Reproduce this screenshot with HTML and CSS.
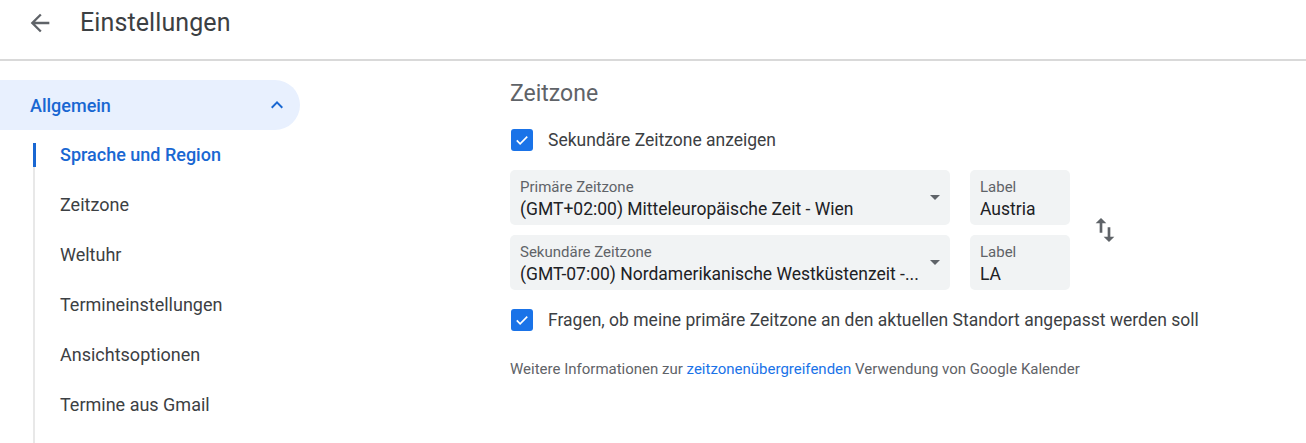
FILE: index.html
```html
<!DOCTYPE html>
<html lang="de">
<head>
<meta charset="utf-8">
<link rel="stylesheet" href="styles.css">
</head>
<body>
<header class="topbar">
  <span class="back">
    <svg width="28" height="28" viewBox="0 0 24 24"><path fill="#5f6368" d="M20 11H7.83l5.59-5.59L12 4l-8 8 8 8 1.41-1.41L7.83 13H20v-2z"/></svg>
  </span>
  <h1 class="title">Einstellungen</h1>
</header>
<div class="layout">
  <nav class="sidebar">
    <div class="group">
      <span>Allgemein</span>
      <svg width="24" height="24" viewBox="0 0 24 24"><path fill="#1967d2" d="M7.41 15.41L12 10.83l4.59 4.58L18 14l-6-6-6 6z"/></svg>
    </div>
    <ul class="sub">
      <li class="active">Sprache und Region</li>
      <li>Zeitzone</li>
      <li>Weltuhr</li>
      <li>Termineinstellungen</li>
      <li>Ansichtsoptionen</li>
      <li>Termine aus Gmail</li>
    </ul>
  </nav>
  <main class="content">
    <h2 class="heading">Zeitzone</h2>
    <label class="check">
      <span class="box"><svg width="18" height="18" viewBox="0 0 24 24"><path fill="none" stroke="#fff" stroke-width="2.2" d="M5 12.5l4.5 4.5L19 7.5"/></svg></span>
      <span>Sekundäre Zeitzone anzeigen</span>
    </label>
    <div class="zones">
      <div class="fields">
        <div class="row">
          <div class="select">
            <div class="ftext">
              <span class="flabel">Primäre Zeitzone</span>
              <span class="fvalue">(GMT+02:00) Mitteleuropäische Zeit - Wien</span>
            </div>
            <span class="caret"></span>
          </div>
          <div class="input">
            <span class="flabel">Label</span>
            <span class="fvalue">Austria</span>
          </div>
        </div>
        <div class="row">
          <div class="select">
            <div class="ftext">
              <span class="flabel">Sekundäre Zeitzone</span>
              <span class="fvalue">(GMT-07:00) Nordamerikanische Westküstenzeit -...</span>
            </div>
            <span class="caret"></span>
          </div>
          <div class="input">
            <span class="flabel">Label</span>
            <span class="fvalue">LA</span>
          </div>
        </div>
      </div>
      <span class="swap">
        <svg width="32" height="32" viewBox="0 0 24 24"><path fill="#5f6368" d="M16 17.01V10h-2v7.01h-3L15 21l4-3.99h-3zM9 3L5 6.99h3V14h2V6.99h3L9 3z"/></svg>
      </span>
    </div>
    <label class="check check2">
      <span class="box"><svg width="18" height="18" viewBox="0 0 24 24"><path fill="none" stroke="#fff" stroke-width="2.2" d="M5 12.5l4.5 4.5L19 7.5"/></svg></span>
      <span>Fragen, ob meine primäre Zeitzone an den aktuellen Standort angepasst werden soll</span>
    </label>
    <p class="info">Weitere Informationen zur <a href="#">zeitzonenübergreifenden</a> Verwendung von Google Kalender</p>
  </main>
</div>
</body>
</html>
```
FILE: styles.css
```css
* { box-sizing: border-box; }
html, body { margin: 0; padding: 0; background: #fff; }
body {
  font-family: Roboto, "Noto Sans", Arial, sans-serif;
  color: #3c4043;
  width: 1306px;
  height: 443px;
  overflow: hidden;
}
.topbar {
  height: 61px;
  display: flex;
  align-items: center;
  border-bottom: 2px solid #d9d9d9;
  padding-left: 26px;
  padding-bottom: 14px;
}
.back { display: flex; width: 28px; height: 28px; }
.title {
  margin: 0 0 0 26px;
  font-size: 25px;
  font-weight: 400;
  color: #3c4043;
  letter-spacing: 0.1px;
}
.layout { display: flex; padding-top: 19px; }
.sidebar { width: 300px; flex: none; }
.group {
  height: 50px;
  background: #e8f0fe;
  border-radius: 0 25px 25px 0;
  display: flex;
  align-items: center;
  justify-content: space-between;
  padding: 0 11px 0 30px;
  color: #1967d2;
  font-size: 18px;
  font-weight: 500;
}
.sub {
  list-style: none;
  margin: 13px 0 0 33px;
  padding: 0;
  border-left: 2px solid #e8e8e8;
}
.sub li {
  height: 50px;
  display: flex;
  align-items: flex-start;
  padding: 0 0 0 25px;
  font-size: 18px;
  line-height: 24px;
  color: #3c4043;
  position: relative;
}
.sub li.active { color: #1967d2; font-weight: 500; }
.sub li.active::before {
  content: "";
  position: absolute;
  left: -2px;
  top: 0;
  width: 3px;
  height: 24px;
  background: #1967d2;
}
.content { padding-left: 210px; }
.heading {
  margin: 0;
  font-size: 23px;
  font-weight: 400;
  color: #5f6368;
  line-height: 28px;
}
.check {
  display: flex;
  align-items: center;
  gap: 15px;
  margin-top: 21px;
  font-size: 17.5px;
  line-height: 22px;
  color: #3c4043;
}
.box {
  width: 22px;
  height: 22px;
  border-radius: 3px;
  background: #1a73e8;
  display: flex;
  align-items: center;
  justify-content: center;
  margin-left: 1px;
  flex: none;
}
.zones {
  display: flex;
  align-items: center;
  margin-top: 19px;
}
.fields { display: flex; flex-direction: column; gap: 10px; }
.row { display: flex; gap: 20px; }
.select, .input {
  background: #f1f3f4;
  border-radius: 5px;
  height: 55px;
}
.select {
  width: 440px;
  display: flex;
  align-items: center;
  padding: 0 10px;
}
.ftext {
  flex: 1;
  min-width: 0;
  align-self: stretch;
  padding-top: 7px;
  display: flex;
  flex-direction: column;
}
.input {
  width: 100px;
  padding: 7px 10px 0;
  display: flex;
  flex-direction: column;
}
.flabel { font-size: 15px; color: #5f6368; line-height: 20px; }
.fvalue { font-size: 17.5px; color: #202124; line-height: 24px; white-space: nowrap; }
.caret {
  width: 0; height: 0;
  border-left: 5px solid transparent;
  border-right: 5px solid transparent;
  border-top: 5px solid #5f6368;
  margin: 0 0 0 16px;
  flex: none;
}
.swap { display: flex; margin-left: 19px; }
.check2 { margin-top: 19px; }
.info {
  margin: 29px 0 0;
  font-size: 15px;
  line-height: 18px;
  color: #5f6368;
}
.info a { color: #1a73e8; text-decoration: none; }
```
